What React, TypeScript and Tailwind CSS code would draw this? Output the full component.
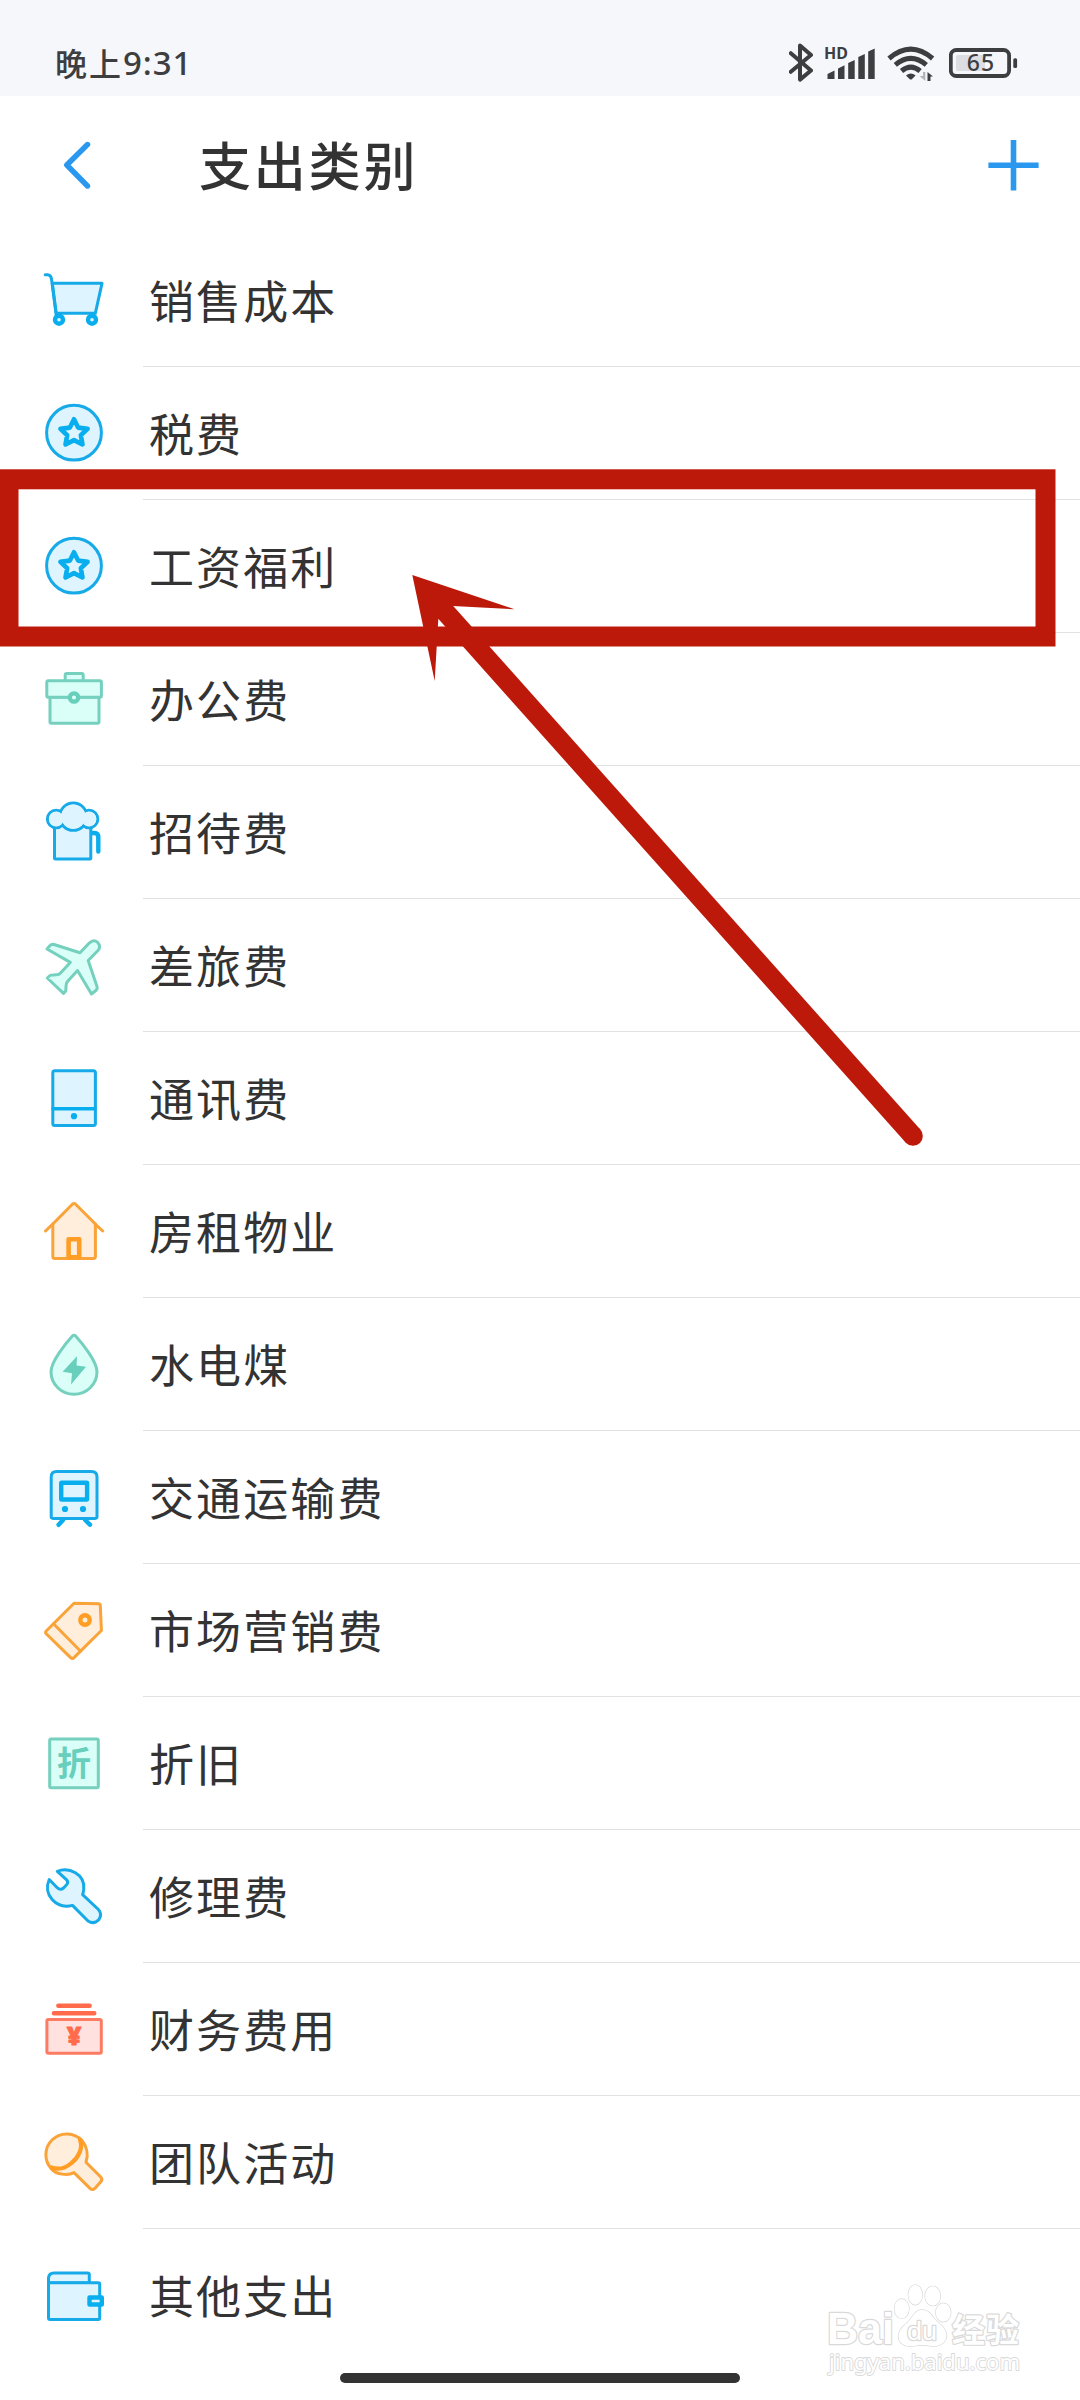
import type { ReactNode } from 'react'

type Tone = 'blue' | 'green' | 'orange' | 'red'

interface Category {
  name: string
  tone: Tone
  icon: ReactNode
}

const TONES: Record<Tone, string> = {
  blue:   'stroke-[#16aae8] fill-[#def4fe] text-[#09aeee]',
  green:  'stroke-[#75d0be] fill-[#dafff8] text-[#68cfbc]',
  orange: 'stroke-[#f9a338] fill-[#ffeedc] text-[#ff9d24]',
  red:    'stroke-[#fb7c62] fill-[#ffe1df] text-[#ff6b4b]',
}

const STAR = (
  <>
    <circle cx="30" cy="29.7" r="27.4" />
    <path
      d="M30 16.2 L34.1 24.6 L43.6 25.9 L36.8 32.2 L38.5 41.5 L30 37.1 L21.5 41.5 L23.2 32.2 L16.4 25.9 L25.9 24.6 Z"
      stroke="currentColor"
      strokeWidth="4.6"
    />
  </>
)

const CATEGORIES: Category[] = [
  {
    name: '销售成本',
    tone: 'blue',
    icon: (
      <>
        <path d="M8.3 13.3 H58 L51.3 43.3 H12.2 Z" />
        <path d="M1.2 4.8 H3.5 Q7 5 7.5 9 L12.2 45" fill="none" />
        <circle cx="15" cy="49.7" r="4" stroke="currentColor" strokeWidth="4.4" />
        <circle cx="48" cy="49.7" r="4" stroke="currentColor" strokeWidth="4.4" />
      </>
    ),
  },
  { name: '税费', tone: 'blue', icon: STAR },
  { name: '工资福利', tone: 'blue', icon: STAR },
  {
    name: '办公费',
    tone: 'green',
    icon: (
      <>
        <rect x="21.2" y="4.5" width="18" height="8" rx="1.5" />
        <rect x="6" y="28" width="49" height="26.3" rx="1.5" />
        <rect x="2.8" y="11.8" width="54.6" height="16.5" rx="1.5" />
        <circle cx="30" cy="28.5" r="4.2" stroke="currentColor" strokeWidth="4.2" />
      </>
    ),
  },
  {
    name: '招待费',
    tone: 'blue',
    icon: (
      <>
        <path d="M48 31 H50.5 Q54.3 31 54.3 35.5 V49.5" fill="none" stroke="currentColor" strokeWidth="4.4" />
        <rect x="10.5" y="22" width="36.3" height="35" rx="1" />
        <circle cx="12.2" cy="17" r="8.8" />
        <circle cx="45" cy="17" r="8.8" />
        <circle cx="29.3" cy="14.7" r="13.6" />
        <g stroke="none">
          <circle cx="12.2" cy="17" r="7.4" />
          <circle cx="45" cy="17" r="7.4" />
          <circle cx="29.3" cy="14.7" r="12.2" />
        </g>
      </>
    ),
  },
  {
    name: '差旅费',
    tone: 'green',
    icon: (
      <path d="M3 14 L6 10.5 Q7.5 9 10 9.5 L36 17.8 L45.5 7.8 Q49.5 4 53.5 7.2 Q57.5 11.5 54 15.5 L44.2 25.5 L53 51.5 Q53.6 53.5 52.4 55 L47.5 59 L33.5 35.5 L23.5 46.5 Q22 48.5 22 51.5 L21.8 56 L19.5 58.4 L3.3 43 L6 40.5 Q7 40 9 40 L12.5 39.8 Q15 39.8 16.5 38 L26.3 27.4 Z" />
    ),
  },
  {
    name: '通讯费',
    tone: 'blue',
    icon: (
      <>
        <rect x="8.8" y="2.7" width="42.6" height="54.8" rx="2" />
        <path d="M9 40.8 H51" stroke="currentColor" strokeWidth="3.6" />
        <circle cx="30" cy="48.2" r="3.1" fill="currentColor" stroke="none" />
      </>
    ),
  },
  {
    name: '房租物业',
    tone: 'orange',
    icon: (
      <>
        <path d="M8.8 23 L28.4 3.2 Q30 1.8 31.6 3.2 L51.4 23 V55.5 Q51.4 57.4 49.5 57.4 H10.7 Q8.8 57.4 8.8 55.5 Z" />
        <path d="M1.5 30 L9 22.8 M58.7 30 L51 22.8" />
        <rect x="24.6" y="38.2" width="10.6" height="18" stroke="currentColor" strokeWidth="4.6" />
      </>
    ),
  },
  {
    name: '水电煤',
    tone: 'green',
    icon: (
      <>
        <path d="M28.4 2 Q30 0.3 31.6 2 C37.5 8.5 53 27 53 37.8 A23 22.5 0 0 1 7 37.8 C7 27 22.5 8.5 28.4 2 Z" />
        <path
          d="M33 22.2 L18.6 37.8 L28 39.2 L27 50.4 L42 32.7 L32.6 31.4 Z"
          fill="currentColor"
          stroke="none"
        />
      </>
    ),
  },
  {
    name: '交通运输费',
    tone: 'blue',
    icon: (
      <>
        <path d="M19 53 L14.6 57.8 M41.2 53 L46 57.8" stroke="currentColor" strokeWidth="4.4" />
        <path d="M12.5 4.5 H47.5 Q53 4.5 53 10 V49.6 Q53 51.4 51.2 51.4 H9 Q7.2 51.4 7.2 49.6 V10 Q7.2 4.5 12.5 4.5 Z" />
        <rect x="17.2" y="15.7" width="25.9" height="16.8" rx="0.5" stroke="currentColor" strokeWidth="4.4" />
        <g fill="currentColor" stroke="none">
          <circle cx="21" cy="42" r="3.1" />
          <circle cx="39" cy="42" r="3.1" />
        </g>
      </>
    ),
  },
  {
    name: '市场营销费',
    tone: 'orange',
    icon: (
      <>
        <path d="M30 3.2 L54.5 3.8 Q56.3 3.9 56.3 5.7 L57.4 30.5 L30 57.6 Q28.3 59.4 26.6 57.6 L2.2 33.8 Q1 32.3 2.2 31 Z" />
        <path d="M9.5 23.8 L36.6 51.2" />
        <circle cx="41" cy="20" r="4.7" stroke="currentColor" strokeWidth="4.4" />
      </>
    ),
  },
  {
    name: '折旧',
    tone: 'green',
    icon: (
      <>
        <rect x="5.7" y="6.1" width="48.6" height="48.6" rx="1.5" />
        <text
          x="30"
          y="43"
          textAnchor="middle"
          fill="currentColor"
          stroke="none"
          className="font-['Noto_Sans_CJK_SC',sans-serif] text-[34px] font-bold"
        >
          折
        </text>
      </>
    ),
  },
  {
    name: '修理费',
    tone: 'blue',
    icon: (
      <path d="M5.2 13.5 L13 21.5 Q16.3 24.8 19.5 22 L22.6 18.7 Q25 16.2 22.4 13.7 L13.3 5.3 C25 0.5 41 8 39.8 23 Q39.5 26 38.6 28.7 L54.4 43.5 Q58.5 48 55 53.5 Q50 58.8 44 55 L28.5 39.4 C12 43.5 -1.5 28.5 5.2 13.5 Z" />
    ),
  },
  {
    name: '财务费用',
    tone: 'red',
    icon: (
      <>
        <path d="M14.4 6.7 H45.6 M10 14.3 H50.2" stroke="currentColor" strokeWidth="4.6" />
        <rect x="2.9" y="20.6" width="54.4" height="33.7" rx="1.5" />
        <text
          x="30"
          y="46.3"
          textAnchor="middle"
          fill="currentColor"
          stroke="currentColor"
          strokeWidth="0.8"
          className="font-['Noto_Sans',sans-serif] text-[25px] font-black"
        >
          ¥
        </text>
      </>
    ),
  },
  {
    name: '团队活动',
    tone: 'orange',
    icon: (
      <>
        <path d="M42 30.3 L56.5 44.8 Q59 47.3 56.8 49.8 L50.8 56.4 Q48.5 58.6 46 56.4 L30 40.6 C24 44 12 42.5 7.5 37 A20.5 20.5 0 0 1 38 8.5 C43 14.5 44.5 23 42 30.3 Z" />
        <path d="M36 8 C39.5 16 34 26 27.5 31 C21 36.5 14 38 7.5 35.5" fill="none" stroke="currentColor" strokeWidth="4.2" />
      </>
    ),
  },
  {
    name: '其他支出',
    tone: 'blue',
    icon: (
      <>
        <path d="M4.5 18 V13 Q5 8 10 8 H43.5 Q45.3 8 45.3 9.8 V18 Z" />
        <rect x="4.5" y="17.8" width="51.2" height="36.6" rx="1.5" />
        <rect x="45.5" y="32.5" width="12.3" height="7" stroke="currentColor" strokeWidth="4.4" />
      </>
    ),
  },
]

function StatusBar() {
  return (
    <div className="flex h-24 items-start bg-[#f5f7fb] text-[#3d3e40]">
      <div className="mt-[38px] ml-[55px] flex h-[48px] items-center text-[32px] leading-none font-medium">
        <span className="tracking-[2px]">晚上</span>
        <span className="font-['Noto_Sans',sans-serif] text-[33px] tracking-[0.9px]">9:31</span>
      </div>
      <div className="mt-[43px] ml-auto flex h-[40px] pr-[62px]">
        {/* Bluetooth */}
        <svg className="w-[24px] h-[40px]" viewBox="0 0 24 40" fill="none" stroke="currentColor" strokeWidth="4" strokeLinecap="round" strokeLinejoin="round">
          <path d="M1.8 10.2 L22 27.5 L11 36.6 V2.6 L22 12 L1.8 28.8" />
        </svg>
        {/* Cellular signal */}
        <svg className="ml-[12px] w-[51px] h-[40px]" viewBox="0 0 51 40" fill="currentColor">
          <text x="-1" y="16" className="font-['Noto_Sans',sans-serif] text-[16px] font-bold">HD</text>
          <path d="M2.5 31 L9.5 27.5 V36 H2.5 Z M13 25.5 L19.5 22.2 V36 H13 Z M23.2 20 L29.7 17 V36 H23.2 Z M33.3 14 L39.8 11 V36 H33.3 Z M43.2 8.5 L49.7 5.5 V36 H43.2 Z" />
        </svg>
        {/* Wi-Fi */}
        <svg className="ml-[11px] w-[50px] h-[40px]" viewBox="0 0 50 40" fill="none" stroke="currentColor" strokeWidth="5" >
          <path d="M2 15.5 Q23.8 -3.2 45.6 15.5" />
          <path d="M8.3 21.8 Q23.8 8.8 39.3 21.8" />
          <path d="M14.5 28 Q23.8 20.2 33.1 28" />
          <path d="M19 32.5 Q23.8 28.5 28.6 32.5 L24.8 36.2 Q23.8 37 22.8 36.2 Z" fill="currentColor" stroke="none" />
          <path d="M38.3 29 V38 L32.5 33 H36 V29 Z" fill="#b3b4b7" stroke="none" />
          <path d="M40.5 38 V29 L46 33.5 H43.5 V38 Z" fill="currentColor" stroke="none" />
        </svg>
        {/* Battery */}
        <svg className="ml-[12px] w-[69px] h-[40px]" viewBox="0 0 69 40">
          <rect x="7" y="12" width="29" height="16" rx="2" fill="#dcdee3" />
          <rect x="1.8" y="7" width="58.3" height="26" rx="5.5" fill="none" stroke="currentColor" strokeWidth="3.8" />
          <rect x="64.3" y="15.2" width="3.8" height="9.8" rx="1.5" fill="currentColor" />
          <text x="32" y="28.4" textAnchor="middle" fill="currentColor" className="font-['Noto_Sans',sans-serif] text-[23px] tracking-[1px] font-medium">65</text>
        </svg>
      </div>
    </div>
  )
}

function Header() {
  return (
    <header className="flex h-[138px] items-center text-[#2b98f0]">
      <svg className="ml-[61px] h-[50px] w-[30px]" viewBox="0 0 30 50" fill="none" stroke="currentColor" strokeWidth="5.4" strokeLinecap="round" strokeLinejoin="round">
        <path d="M26.5 4.5 L5.8 25 L26.5 46" />
      </svg>
      <h1 className="-mt-[2px] ml-[108px] text-[52px] leading-none font-medium tracking-[2.8px] text-[#333]">支出类别</h1>
      <svg className="mr-[41px] ml-auto h-[51px] w-[51px]" viewBox="0 0 51 51" stroke="currentColor" strokeWidth="5.6">
        <path d="M0.4 25.2 H50.6 M25.5 0 V50.6" />
      </svg>
    </header>
  )
}

function CategoryRow({ category }: { category: Category }) {
  return (
    <li className="group flex h-[133px]">
      <div className="flex h-[132px] w-[143px] shrink-0 items-center pl-[44px]">
        <svg
          className={`h-[60px] w-[60px] overflow-visible ${TONES[category.tone]}`}
          viewBox="0 0 60 60"
          strokeWidth="3"
          strokeLinecap="round"
          strokeLinejoin="round"
        >
          {category.icon}
        </svg>
      </div>
      <div className="flex flex-1 items-center border-b border-[#e2e2e2] pb-[2px] pl-[6px] text-[45px] leading-none tracking-[2.1px] text-[#333] group-last:border-transparent">
        {category.name}
      </div>
    </li>
  )
}

/** Red frame round the salary row plus the arrow that points at it. */
function Annotation() {
  return (
    <svg className="pointer-events-none absolute top-[460px] left-0 h-[700px] w-[1080px]" viewBox="0 460 1080 700">
      <rect x="8.5" y="479.3" width="1037" height="157.2" fill="none" stroke="#bd190a" strokeWidth="20" />
      <path d="M440.5 606.5 L913 1136" stroke="#bd190a" strokeWidth="19.7" />
      <circle cx="913" cy="1136" r="9.8" fill="#bd190a" />
      <path d="M412.3 575 L514.5 609.3 L453 606 L438.3 619.3 L434.7 681 Z" fill="#bd190a" />
    </svg>
  )
}

function Watermark() {
  return (
    <svg
      className="pointer-events-none absolute top-[2275px] left-[820px] h-[110px] w-[210px]"
      viewBox="820 2275 210 110"
      fill="#fff"
      stroke="#d9d9d9"
      strokeWidth="2.4"
      strokeLinejoin="round"
      paintOrder="stroke"
    >
      <text x="827" y="2344" textLength="67" lengthAdjust="spacingAndGlyphs" className="font-['Liberation_Sans',sans-serif] text-[44px] font-bold">Bai</text>
      <g strokeWidth="1.3">
        <ellipse cx="901.7" cy="2308.7" rx="7.3" ry="9.7" />
        <ellipse cx="915.3" cy="2294.8" rx="7" ry="10" />
        <ellipse cx="932.7" cy="2296" rx="7.7" ry="9.7" />
        <ellipse cx="943.3" cy="2312.5" rx="7.5" ry="9.3" />
        <path d="M922 2310 C931 2310 932 2318 939 2323 C946 2329 949 2337 944 2342 C937 2349 930 2345 922 2345 C914 2345 908 2349 901 2343 C896 2337 899 2329 906 2324 C913 2318 914 2310 922 2310 Z" />
      </g>
      <text x="907" y="2340" textLength="30" lengthAdjust="spacingAndGlyphs" className="font-['Liberation_Sans',sans-serif] text-[26px]">du</text>
      <text x="952" y="2341.5" textLength="67" className="font-['Noto_Sans_CJK_SC',sans-serif] text-[33px] font-bold">经验</text>
      <text x="829" y="2370" textLength="191" lengthAdjust="spacingAndGlyphs" strokeWidth="1.8" className="font-['Noto_Sans',sans-serif] text-[22px]">jingyan.baidu.com</text>
    </svg>
  )
}

export default function App() {
  return (
    <div className="relative h-[2400px] w-[1080px] overflow-hidden bg-white font-['Noto_Sans_CJK_SC',sans-serif]">
      <StatusBar />
      <Header />
      <ul>
        {CATEGORIES.map((category) => (
          <CategoryRow key={category.name} category={category} />
        ))}
      </ul>
      <Annotation />
      <Watermark />
      {/* Home indicator */}
      <div className="absolute bottom-[17px] left-[340px] h-[10px] w-[400px] rounded-full bg-[#333]" />
    </div>
  )
}
